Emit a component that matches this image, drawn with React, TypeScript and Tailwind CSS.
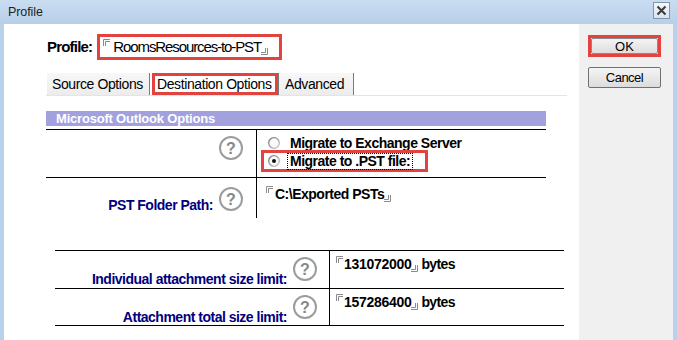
const font = { fontFamily: '"Liberation Sans", Arial, sans-serif' };

function Help() {
  return (
    <div className="w-[24px] h-[24px] shrink-0 rounded-full border-2 border-[#9c9c9c] bg-white flex items-center justify-center">
      <span className="text-[16px] font-bold leading-none text-[#878787] mt-[1px]">?</span>
    </div>
  );
}

// small double-line corner marks around editable values
function Open() {
  return (
    <svg width="7" height="7" viewBox="0 0 7 7" className="shrink-0 self-start">
      <path d="M0.5 7 V0.5 H7 M2.5 7 V2.5 H7" fill="none" stroke="#8a8a8a" strokeWidth="1" />
    </svg>
  );
}

function Close() {
  return (
    <svg width="7" height="7" viewBox="0 0 7 7" className="shrink-0 self-end">
      <path d="M6.5 0 V6.5 H0 M4.5 0 V4.5 H0" fill="none" stroke="#8a8a8a" strokeWidth="1" />
    </svg>
  );
}

function Radio({ checked }: { checked?: boolean }) {
  return (
    <svg width="12" height="12" viewBox="0 0 12 12" className="shrink-0">
      <defs>
        <linearGradient id="rg" x1="0" y1="0" x2="1" y2="1">
          <stop offset="0" stopColor="#6f6f6f" />
          <stop offset="1" stopColor="#cfcfcf" />
        </linearGradient>
      </defs>
      <circle cx="6" cy="6" r="5.3" fill="#fafafa" stroke="url(#rg)" strokeWidth="1.3" />
      {checked && <circle cx="6" cy="6" r="2" fill="#111" />}
    </svg>
  );
}

function App() {
  return (
    <div
      className="w-[677px] h-[340px] flex flex-col bg-[#b9d1ea] overflow-hidden text-black"
      style={font}
    >
      {/* title bar */}
      <div className="h-[24px] shrink-0 flex items-center justify-between pl-[8px] pr-[7px] bg-gradient-to-b from-[#c9ddf1] to-[#b8cfe9]">
        <span className="text-[12.5px] text-[#1e1e1e] tracking-[-0.1px]">Profile</span>
        <div className="w-[17px] h-[17px] border border-[#7f94ad] bg-gradient-to-b from-[#f4f7fb] to-[#d8e2ee] flex items-center justify-center mb-[4px]">
          <svg width="11" height="11" viewBox="0 0 11 11">
            <path d="M1.5 1.5 L9.5 9.5 M9.5 1.5 L1.5 9.5" stroke="#3a3a3a" strokeWidth="2" />
          </svg>
        </div>
      </div>

      <div className="flex-1 flex pl-[4px] pr-[4px]">
        {/* main content */}
        <div className="w-[575px] bg-white pl-[42px] pt-[10px]">
          {/* profile name */}
          <div className="flex items-center h-[26px]">
            <span className="ml-[1px] text-[15px] font-bold tracking-[-0.8px]">Profile:</span>
            <div className="ml-[5px] h-[26px] w-[185px] border-[3px] border-[#e3433f] flex items-stretch pl-[3px] pr-[4px] py-[2px]">
              <Open />
              <span className="text-[15px] leading-[16px] tracking-[-1.1px] ml-[3px] self-center">
                RoomsResources-to-PST
              </span>
              <Close />
            </div>
          </div>

          {/* tabs */}
          <div className="mt-[13px] ml-[1px] flex h-[22px] items-stretch">
            <div className="w-[102px] bg-gradient-to-b from-[#f7f7f7] to-[#ececec] flex items-center pl-[5px] text-[14px] tracking-[-0.4px]">
              Source Options
            </div>
            <div className="w-[1px] bg-[#7a7a7a]" />
            <div className="w-[2px]" />
            <div className="w-[126px] border-[3px] border-[#e3433f] flex items-center pl-[2px] text-[14px] tracking-[-0.4px]">
              Destination Options
            </div>
            <div className="w-[1px] bg-[#7a7a7a]" />
            <div className="w-[74px] bg-gradient-to-b from-[#f7f7f7] to-[#ececec] flex items-center pl-[6px] text-[14px] tracking-[-0.4px]">
              Advanced
            </div>
            <div className="w-[1px] bg-[#7a7a7a]" />
          </div>
          <div className="h-[1px] w-[521px] bg-[#e4e4e4]" />

          {/* section header */}
          <div className="mt-[15px] w-[500px] h-[15px] bg-[#a2a1de] flex items-center pl-[10px]">
            <span className="text-[13px] font-bold text-white leading-none tracking-[-0.2px]">
              Microsoft Outlook Options
            </span>
          </div>

          {/* upper table */}
          <div className="mt-[3px] w-[500px] border-t border-black">
            <div className="flex h-[48px] border-b border-black">
              <div className="w-[211px] border-r border-black flex justify-end pr-[13px] pt-[6px]">
                <Help />
              </div>
              <div className="flex-1 pl-[4px] pt-[5px] flex flex-col">
                <div className="flex items-center h-[15px] pl-[7px] gap-[10px]">
                  <Radio />
                  <span className="text-[14px] font-bold leading-none tracking-[-0.5px]">
                    Migrate to Exchange Server
                  </span>
                </div>
                <div className="w-[167px] h-[22px] border-[3px] border-[#e3433f] flex items-center pl-[4px] gap-[7px]">
                  <Radio checked />
                  <span className="text-[14px] font-bold leading-[15px] tracking-[-0.5px] border border-dotted border-black px-[2px]">
                    Migrate to .PST file:
                  </span>
                </div>
              </div>
            </div>
            <div className="flex h-[40px]">
              <div className="w-[211px] border-r border-black flex justify-end items-start pr-[13px] pt-[9px] gap-[6px]">
                <span className="mt-[12px] text-[14px] font-bold leading-[13px] text-[#00007f] tracking-[-0.5px]">
                  PST Folder Path:
                </span>
                <Help />
              </div>
              <div className="flex-1 pl-[9px] pt-[8px]">
                <div className="flex h-[16px]">
                  <Open />
                  <span className="ml-[2px] text-[14px] font-bold leading-[16px] tracking-[-0.5px]">
                    C:\Exported PSTs
                  </span>
                  <Close />
                </div>
              </div>
            </div>
          </div>

          {/* lower table */}
          <div className="mt-[32px] ml-[9px] w-[509px] border-t border-b border-black">
            {[
              ["Individual attachment size limit:", "131072000"],
              ["Attachment total size limit:", "157286400"],
            ].map(([label, value], i) => (
              <div
                key={label}
                className={`flex h-[37px] ${i > 0 ? "border-t border-black" : ""}`}
              >
                <div className="w-[275px] border-r border-black flex justify-end items-start pr-[12px] pt-[6px] gap-[6px]">
                  <span className="mt-[16px] text-[14px] font-bold leading-[13px] text-[#00007f] tracking-[-0.5px]">
                    {label}
                  </span>
                  <Help />
                </div>
                <div className="flex-1 pl-[6px] pt-[5px]">
                  <div className="flex h-[16px] items-stretch">
                    <Open />
                    <span className="ml-[1px] text-[14px] font-bold leading-[16px] tracking-[-0.3px]">{value}</span>
                    <Close />
                    <span className="ml-[3px] text-[14px] font-bold leading-[16px] tracking-[-0.6px]">
                      bytes
                    </span>
                  </div>
                </div>
              </div>
            ))}
          </div>
        </div>

        {/* button panel */}
        <div className="w-[94px] bg-[#f0f0f0] pt-[11px] pl-[9px] flex flex-col">
          <div className="w-[73px] h-[22px] border-[3px] border-[#e3433f] flex">
            <div className="flex-1 border border-[#8a8a8a] rounded-[2px] bg-gradient-to-b from-[#f4f4f4] to-[#dedede] flex items-center justify-center text-[13px] leading-none">
              OK
            </div>
          </div>
          <div className="mt-[10px] w-[73px] h-[21px] border border-[#707070] rounded-[2px] bg-gradient-to-b from-[#f4f4f4] to-[#dcdcdc] flex items-center justify-center text-[13px] leading-none tracking-[-0.5px]">
            Cancel
          </div>
        </div>
      </div>
    </div>
  );
}

export default App;
